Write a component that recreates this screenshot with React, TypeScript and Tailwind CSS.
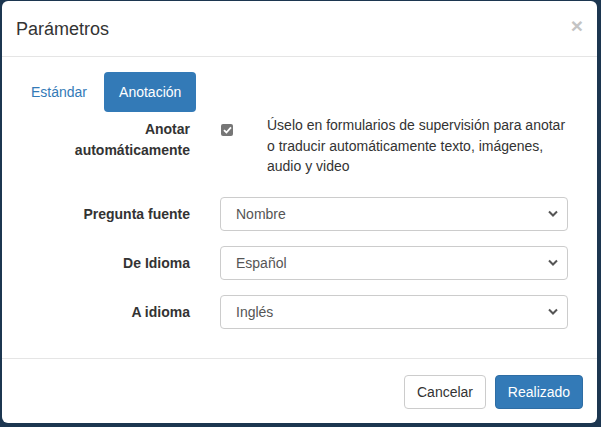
import React from 'react';

const ChevronDown: React.FC = () => (
  <svg width="10" height="7" viewBox="0 0 10 7" className="text-[#555]">
    <path d="M1 1.5 L5 5.5 L9 1.5" fill="none" stroke="currentColor" strokeWidth="2" />
  </svg>
);

interface SelectRowProps {
  label: string;
  value: string;
}

const SelectRow: React.FC<SelectRowProps> = ({ label, value }) => (
  <div className="flex items-center">
    <div className="w-[188px] text-right font-bold text-[#333]">{label}</div>
    <div className="ml-[30px] flex h-[34px] w-[348px] items-center justify-between rounded-[4px] border border-[#ccc] bg-white pl-[15px] pr-[9px] text-[#555]">
      <span>{value}</span>
      <ChevronDown />
    </div>
  </div>
);

const App: React.FC = () => {
  return (
    <div className="h-[427px] w-[601px] overflow-hidden bg-[#1c3650] pl-[2px] pt-[1px] font-['Liberation_Sans',Arial,sans-serif] text-[14px] leading-[20px]">
      <div className="flex h-[422px] w-[595px] flex-col rounded-[6px] bg-white">
        {/* header */}
        <div className="flex h-[56px] items-center justify-between border-b border-[#e5e5e5] px-[14px]">
          <h4 className="text-[18px] leading-[26px] text-[#333]">Parámetros</h4>
          <span className="-mt-[6px] text-[21px] font-bold leading-none text-[#c4c4c4]">×</span>
        </div>

        {/* body */}
        <div className="flex-1 pt-[15px]">
          <div className="flex gap-[2px] pl-[14px]">
            <span className="px-[15px] py-[10px] text-[#337ab7]">Estándar</span>
            <span className="rounded-[4px] bg-[#337ab7] px-[15px] py-[10px] text-white">Anotación</span>
          </div>

          <div className="mt-[3px] flex items-start">
            <div className="w-[188px] pt-[4px] text-right font-bold leading-[21px] text-[#333]">
              Anotar
              <br />
              automáticamente
            </div>
            <div className="ml-[31px] mt-[9px] flex h-[12px] w-[12px] items-center justify-center rounded-[2px] bg-[#767676]">
              <svg width="9" height="8" viewBox="0 0 9 8">
                <path d="M1 4.2 L3.4 6.5 L8 1.3" fill="none" stroke="white" strokeWidth="1.8" />
              </svg>
            </div>
            <p className="ml-[34px] w-[302px] leading-[20.5px] text-[#333]">
              Úselo en formularios de supervisión para anotar o traducir automáticamente texto, imágenes, audio y video
            </p>
          </div>

          <div className="mt-[20px] flex flex-col gap-[15px]">
            <SelectRow label="Pregunta fuente" value="Nombre" />
            <SelectRow label="De Idioma" value="Español" />
            <SelectRow label="A idioma" value="Inglés" />
          </div>
        </div>

        {/* footer */}
        <div className="flex justify-end gap-[9px] border-t border-[#e5e5e5] px-[14px] pb-[14px] pt-[16px]">
          <button className="h-[34px] w-[82px] rounded-[4px] border border-[#ccc] bg-white text-[#333]">Cancelar</button>
          <button className="h-[34px] w-[88px] rounded-[4px] border border-[#2e6da4] bg-[#337ab7] text-white">Realizado</button>
        </div>
      </div>
    </div>
  );
};

export default App;
